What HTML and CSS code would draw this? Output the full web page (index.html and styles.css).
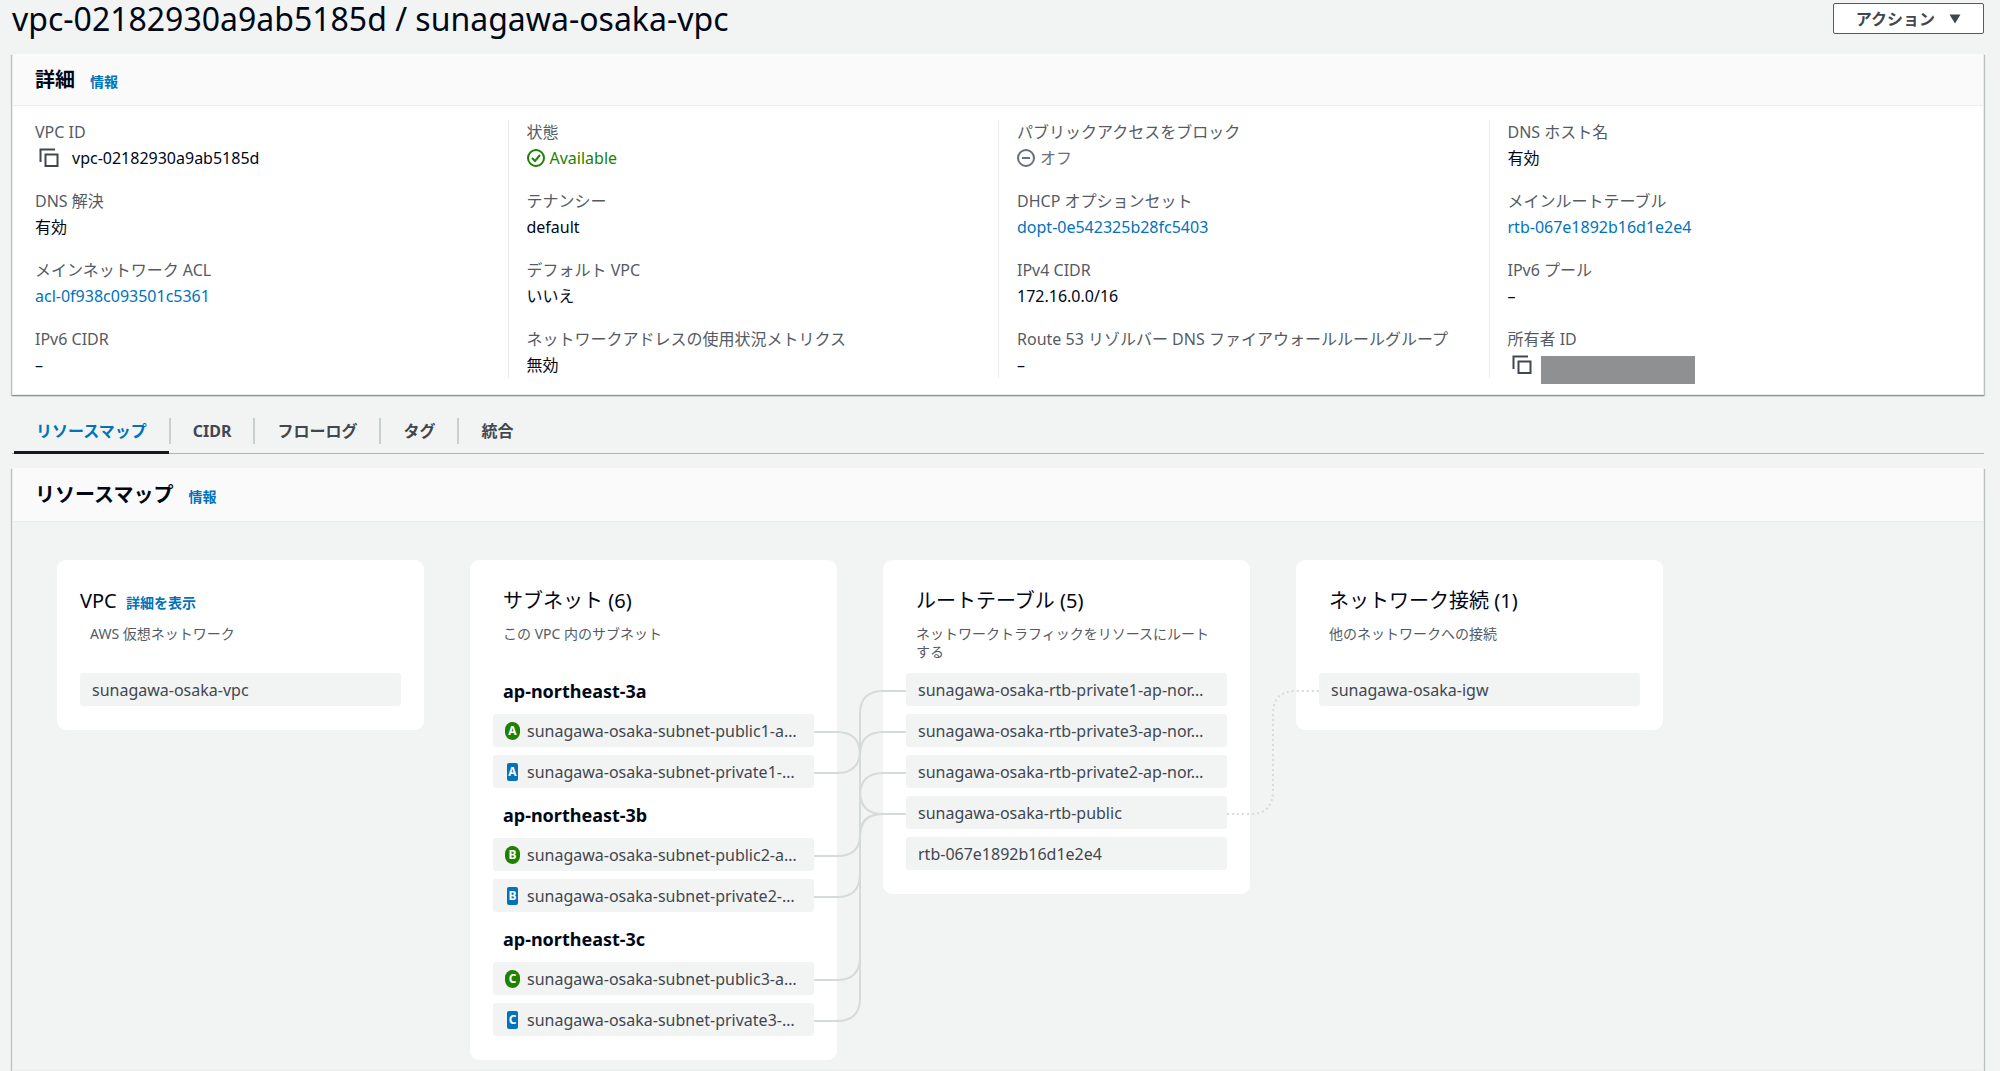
FILE: index.html
```html
<!DOCTYPE html>
<html lang="ja">
<head>
<meta charset="utf-8">
<meta name="viewport" content="width=device-width, initial-scale=1">
<title>vpc-02182930a9ab5185d / sunagawa-osaka-vpc</title>
<link rel="stylesheet" href="styles.css">
</head>
<body>
<svg class="sprite" aria-hidden="true">
  <symbol id="copy" viewBox="0 0 20 20">
    <path d="M1.5 14V1.5H16" fill="none" stroke="currentColor" stroke-width="2"/>
    <rect x="6.5" y="6.5" width="12" height="11.5" fill="none" stroke="currentColor" stroke-width="2"/>
  </symbol>
</svg>
<main class="page">
  <header class="page-header">
    <h1>vpc-02182930a9ab5185d / sunagawa-osaka-vpc</h1>
    <button class="action-button" type="button">アクション
      <svg class="caret" viewBox="0 0 12 10" aria-hidden="true"><path d="M0.5 0.5h11L6 9.5z" fill="currentColor"/></svg>
    </button>
  </header>

  <section class="panel">
    <div class="panel-header">
      <h2>詳細</h2><a class="info" href="#">情報</a>
    </div>
    <div class="details">
      <dl class="column">
        <div class="field"><dt>VPC ID</dt><dd><button class="copy" type="button" aria-label="コピー"><svg><use href="#copy"/></svg></button>vpc-02182930a9ab5185d</dd></div>
        <div class="field"><dt>DNS 解決</dt><dd>有効</dd></div>
        <div class="field"><dt>メインネットワーク ACL</dt><dd><a href="#">acl-0f938c093501c5361</a></dd></div>
        <div class="field"><dt>IPv6 CIDR</dt><dd>–</dd></div>
      </dl>
      <dl class="column">
        <div class="field"><dt>状態</dt><dd class="status ok"><svg viewBox="0 0 18 18" aria-hidden="true"><circle cx="9" cy="9" r="8"/><path d="M5 9l3 3 5-6"/></svg>Available</dd></div>
        <div class="field"><dt>テナンシー</dt><dd>default</dd></div>
        <div class="field"><dt>デフォルト VPC</dt><dd>いいえ</dd></div>
        <div class="field"><dt>ネットワークアドレスの使用状況メトリクス</dt><dd>無効</dd></div>
      </dl>
      <dl class="column">
        <div class="field"><dt>パブリックアクセスをブロック</dt><dd class="status off"><svg viewBox="0 0 18 18" aria-hidden="true"><circle cx="9" cy="9" r="8"/><path d="M5 9h8"/></svg>オフ</dd></div>
        <div class="field"><dt>DHCP オプションセット</dt><dd><a href="#">dopt-0e542325b28fc5403</a></dd></div>
        <div class="field"><dt>IPv4 CIDR</dt><dd>172.16.0.0/16</dd></div>
        <div class="field"><dt>Route 53 リゾルバー DNS ファイアウォールルールグループ</dt><dd>–</dd></div>
      </dl>
      <dl class="column">
        <div class="field"><dt>DNS ホスト名</dt><dd>有効</dd></div>
        <div class="field"><dt>メインルートテーブル</dt><dd><a href="#">rtb-067e1892b16d1e2e4</a></dd></div>
        <div class="field"><dt>IPv6 プール</dt><dd>–</dd></div>
        <div class="field"><dt>所有者 ID</dt><dd class="owner"><button class="copy" type="button" aria-label="コピー"><svg><use href="#copy"/></svg></button><span class="redacted"></span></dd></div>
      </dl>
    </div>
  </section>

  <nav class="tabs">
    <a class="tab active" href="#" aria-current="page">リソースマップ</a>
    <a class="tab" href="#">CIDR</a>
    <a class="tab" href="#">フローログ</a>
    <a class="tab" href="#">タグ</a>
    <a class="tab" href="#">統合</a>
  </nav>

  <section class="panel map-panel">
    <div class="panel-header">
      <h2>リソースマップ</h2><a class="info" href="#">情報</a>
    </div>
    <div class="map">
      <article class="card vpc">
        <h3>VPC <a class="info" href="#">詳細を表示</a></h3>
        <p>AWS 仮想ネットワーク</p>
        <ul><li>sunagawa-osaka-vpc</li></ul>
      </article>

      <article class="card">
        <h3>サブネット (6)</h3>
        <p>この VPC 内のサブネット</p>
        <div class="zones">
          <section>
            <h4>ap-northeast-3a</h4>
            <ul>
              <li><span class="badge public">A</span><span class="name">sunagawa-osaka-subnet-public1-a…</span></li>
              <li><span class="badge private">A</span><span class="name">sunagawa-osaka-subnet-private1-…</span></li>
            </ul>
          </section>
          <section>
            <h4>ap-northeast-3b</h4>
            <ul>
              <li><span class="badge public">B</span><span class="name">sunagawa-osaka-subnet-public2-a…</span></li>
              <li><span class="badge private">B</span><span class="name">sunagawa-osaka-subnet-private2-…</span></li>
            </ul>
          </section>
          <section>
            <h4>ap-northeast-3c</h4>
            <ul>
              <li><span class="badge public">C</span><span class="name">sunagawa-osaka-subnet-public3-a…</span></li>
              <li><span class="badge private">C</span><span class="name">sunagawa-osaka-subnet-private3-…</span></li>
            </ul>
          </section>
        </div>
      </article>

      <article class="card">
        <h3>ルートテーブル (5)</h3>
        <p>ネットワークトラフィックをリソースにルートする</p>
        <ul>
          <li>sunagawa-osaka-rtb-private1-ap-nor…</li>
          <li>sunagawa-osaka-rtb-private3-ap-nor…</li>
          <li>sunagawa-osaka-rtb-private2-ap-nor…</li>
          <li>sunagawa-osaka-rtb-public</li>
          <li>rtb-067e1892b16d1e2e4</li>
        </ul>
      </article>

      <article class="card">
        <h3>ネットワーク接続 (1)</h3>
        <p>他のネットワークへの接続</p>
        <ul><li>sunagawa-osaka-igw</li></ul>
      </article>

      <svg class="links" width="1606" height="500" aria-hidden="true">
        <path d="M757 172h23q23 0 23 23v36q0 23 23 23h23"/>
        <path d="M757 213h23q23 0 23-23v-36q0-23 23-23h23"/>
        <path d="M757 296h23q23 0 23-21t23-21h23"/>
        <path d="M757 337h23q23 0 23-23v-78q0-23 23-23h23"/>
        <path d="M757 420h23q23 0 23-23v-120q0-23 23-23h23"/>
        <path d="M757 461h23q23 0 23-23v-243q0-23 23-23h23"/>
        <path class="dotted" d="M1170 254h23q23 0 23-23v-77q0-23 23-23h23"/>
      </svg>
    </div>
  </section>
</main>
</body>
</html>
```

FILE: styles.css
```css
* {
  box-sizing: border-box;
}

body {
  margin: 0;
  background: #f2f3f3;
  color: #000716;
  font-family: "Noto Sans", "Noto Sans CJK JP", sans-serif;
  font-size: 16px;
  line-height: 26px;
}

h1, h2, h3, h4, p, ul, dl, dd {
  margin: 0;
  padding: 0;
}

ul {
  list-style: none;
}

a {
  color: #0073bb;
  text-decoration: none;
}

button {
  font: inherit;
  color: #414750;
  cursor: pointer;
}

.sprite {
  position: absolute;
  width: 0;
  height: 0;
}

.page {
  display: flex;
  flex-direction: column;
  min-height: 100vh;
  padding: 0 16px 0 12px;
}

.page-header {
  display: flex;
  justify-content: space-between;
  align-items: flex-start;
  height: 54px;
}

h1 {
  font-size: 32px;
  font-weight: 400;
  line-height: 38px;
}

.action-button {
  display: flex;
  align-items: center;
  gap: 14px;
  height: 31px;
  margin-top: 3px;
  padding: 0 22px;
  border: 1px solid #545b64;
  border-radius: 2px;
  background: #fff;
  font-weight: 700;
}

.caret {
  width: 12px;
  height: 10px;
}

.panel {
  background: #fff;
  border: 1px solid #eaeded;
  border-top: 0;
  box-shadow: 0 1px 1px #879596, 1px 1px 1px #c3cacb, -1px 1px 1px #c3cacb;
}

.panel-header {
  display: flex;
  align-items: center;
  gap: 15px;
  height: 52px;
  padding: 0 22px;
  background: #fafafa;
  border-bottom: 1px solid #eaeded;
}

h2 {
  font-size: 20px;
  font-weight: 700;
}

.info {
  font-size: 14px;
  font-weight: 700;
}

.panel-header .info {
  padding-top: 4px;
}

.details {
  display: grid;
  grid-template-columns: repeat(4, 1fr);
  padding: 14px 4px 16px;
}

.column {
  display: grid;
  gap: 18px;
  padding-left: 18px;
  border-left: 1px solid #eaeded;
}

.column:first-child {
  padding-left: 17px;
  border-left-color: transparent;
}

dt {
  color: #545b64;
  line-height: 25px;
}

dd {
  display: flex;
  align-items: center;
  height: 26px;
}

.copy {
  display: flex;
  margin-right: 13px;
  padding: 0 0 0 4px;
  border: 0;
  background: none;
}

.copy svg {
  width: 20px;
  height: 20px;
}

.status {
  gap: 5px;
}

.status svg {
  width: 18px;
  height: 18px;
  fill: none;
  stroke: currentColor;
  stroke-width: 2;
}

.ok {
  color: #1d8102;
}

.off {
  color: #687078;
}

.owner {
  align-items: flex-start;
  padding-top: 3px;
}

.redacted {
  width: 154px;
  height: 28px;
  margin: 1px 0 0 -4px;
  background: #8f9092;
}

.tabs {
  display: flex;
  align-items: center;
  height: 59px;
  padding: 13px 2px 0;
  border-bottom: 1px solid #aab7b8;
}

.tab {
  position: relative;
  padding: 0 22px;
  color: #414750;
  font-weight: 700;
}

.tab + .tab {
  border-left: 2px solid #c8cfd0;
}

.tab.active {
  color: #0073bb;
}

.tab.active::after {
  content: "";
  position: absolute;
  left: 0;
  right: 0;
  bottom: -10px;
  height: 3px;
  background: #16191f;
}

.map-panel {
  flex: 1;
  margin-top: 14px;
  background: #f2f3f3;
}

.map-panel .panel-header {
  height: 54px;
}

.map {
  position: relative;
  display: flex;
  align-items: flex-start;
  gap: 46px;
  margin: 38px 44px 10px;
}

.card {
  flex: none;
  width: 367px;
  padding: 24px 23px;
  border-radius: 9px;
  background: #fff;
}

.card h3 {
  height: 34px;
  padding-left: 10px;
  font-size: 20px;
  font-weight: 400;
  line-height: 34px;
}

.card.vpc h3 {
  padding-left: 0;
}

.card h3 .info {
  margin-left: 4px;
}

.card p {
  height: 40px;
  margin: 7px 0 8px;
  padding: 0 10px;
  color: #545b64;
  font-size: 14px;
  line-height: 18px;
}

.card ul {
  display: grid;
  gap: 8px;
}

.card li {
  display: flex;
  align-items: center;
  height: 33px;
  padding: 0 12px;
  border-radius: 3px;
  background: #f2f3f3;
  color: #414750;
  white-space: nowrap;
}

.zones {
  display: grid;
  gap: 9px;
}

h4 {
  height: 41px;
  padding-left: 10px;
  font-size: 18px;
  line-height: 36px;
}

.badge {
  display: flex;
  align-items: center;
  justify-content: center;
  flex: none;
  height: 18px;
  color: #fff;
  font-size: 12px;
  font-weight: 700;
}

.public {
  width: 15px;
  margin-right: 7px;
  border-radius: 8px;
  background: #1d8102;
}

.private {
  width: 11px;
  margin: 0 9px 0 2px;
  border-radius: 2px;
  background: #0073bb;
}

.links {
  position: absolute;
  top: 0;
  left: 0;
  fill: none;
  stroke: #d5dbdb;
  stroke-width: 2;
  pointer-events: none;
}

.dotted {
  stroke-dasharray: 2 3;
}
```
